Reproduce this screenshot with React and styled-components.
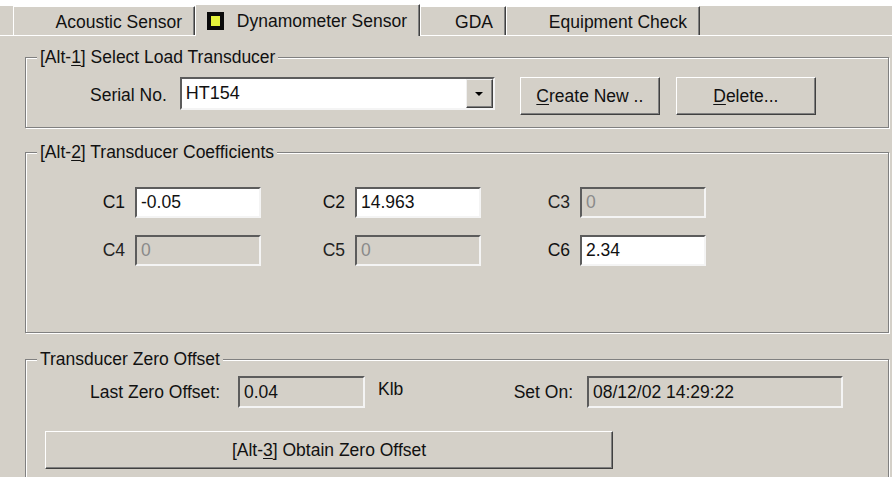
import React from "react";
import styled, { createGlobalStyle } from "styled-components";

const FACE = "#d4d0c8";
const SHADOW = "#808080";
const DARK = "#404040";

const GlobalStyle = createGlobalStyle`
  html, body {
    margin: 0;
    padding: 0;
    background: ${FACE};
  }
  body {
    font-family: "Liberation Sans", Arial, sans-serif;
    font-size: 17.5px;
    color: #111;
  }
`;

const Window = styled.div`
  width: 892px;
  height: 477px;
  overflow: hidden;
  background: ${FACE};
  display: flex;
  flex-direction: column;
`;

const TabStrip = styled.div`
  display: flex;
  align-items: flex-end;
  height: 29px;
  border-top: 6px solid #fff;
  padding-left: 13px;
  background: ${FACE};
`;

const Tab = styled.div`
  box-sizing: border-box;
  position: relative;
  z-index: ${(p) => (p.$active ? 1 : 0)};
  width: ${(p) => p.$w}px;
  height: ${(p) => (p.$active ? 32 : 29)}px;
  margin-bottom: ${(p) => (p.$active ? -1 : 0)}px;
  display: flex;
  align-items: center;
  justify-content: flex-end;
  gap: 13px;
  padding: ${(p) => (p.$active ? "1px 12px 0 0" : "3px 12px 0 0")};
  background: ${FACE};
  border-left: 1px solid #fff;
  border-top: 1px solid #fff;
  border-right: 1px solid ${DARK};
  box-shadow: inset -1px 0 0 ${SHADOW};
  white-space: nowrap;
`;

const TabIcon = styled.svg`
  width: 17px;
  height: 18px;
  flex: none;
`;

const Panel = styled.div`
  flex: 1;
  border-top: 1px solid #fff;
  padding: 11px 3px 0 25px;
  display: flex;
  flex-direction: column;
`;

const GroupBox = styled.fieldset`
  margin: ${(p) => p.$mt}px 0 0;
  padding: ${(p) => p.$pt}px 0 ${(p) => p.$pb}px;
  min-width: 0;
  border: 1px solid ${SHADOW};
  box-shadow: inset 1px 1px 0 #fff, 1px 1px 0 #fff;
`;

const Legend = styled.legend`
  margin-left: 11px;
  padding: 0 3px;
  line-height: 20px;
  background: ${FACE};
`;

const Key = styled.span`
  text-decoration: underline;
  text-underline-offset: 2px;
`;

const SerialRow = styled.div`
  display: flex;
  align-items: flex-start;
  padding-left: 64px;
`;

const Label = styled.span`
  line-height: ${(p) => p.$lh || 20}px;
  white-space: nowrap;
  margin-left: ${(p) => p.$ml || 0}px;
`;

const Combo = styled.div`
  box-sizing: border-box;
  width: 315px;
  height: 33px;
  margin-left: 13px;
  display: flex;
  align-items: stretch;
  background: #fff;
  border: 2px solid;
  border-color: #5c5c5c #f4f4f4 #f4f4f4 #5c5c5c;
`;

const ComboText = styled.span`
  flex: 1;
  padding-left: 4px;
  line-height: 29px;
  font-size: 18px;
`;

const DropButton = styled.span`
  box-sizing: border-box;
  width: 27px;
  display: flex;
  align-items: center;
  justify-content: center;
  background: ${FACE};
  border: 1px solid;
  border-color: #f0f0f0 ${DARK} ${DARK} #f0f0f0;
  box-shadow: inset -1px -1px 0 ${SHADOW};
`;

const Arrow = styled.span`
  width: 0;
  height: 0;
  border-left: 4px solid transparent;
  border-right: 4px solid transparent;
  border-top: 4px solid #000;
`;

const Button = styled.button`
  box-sizing: border-box;
  width: ${(p) => p.$w}px;
  height: 38px;
  margin-left: ${(p) => p.$ml || 0}px;
  padding: 0;
  font: inherit;
  color: #111;
  background: ${FACE};
  border: 1px solid;
  border-color: #fff ${DARK} ${DARK} #fff;
  box-shadow: inset -1px -1px 0 ${SHADOW};
  cursor: default;
`;

const CoeffGrid = styled.div`
  display: grid;
  grid-template-columns: 220px 227px 174px;
  row-gap: 17px;
  padding-left: 59px;
`;

const Cell = styled.label`
  display: flex;
  align-items: center;
  gap: 10px;
`;

const CellLabel = styled.span`
  width: 40px;
  text-align: right;
  color: ${(p) => (p.$off ? "#222" : "#111")};
`;

const Field = styled.input`
  box-sizing: border-box;
  width: ${(p) => p.$w}px;
  height: ${(p) => p.$h || 31}px;
  margin: 0;
  padding: 0 4px;
  font: inherit;
  color: ${(p) => (p.$off ? "#8a8a8a" : "#111")};
  background: ${(p) => (p.$fill ? "#fff" : FACE)};
  border: 2px solid;
  border-color: #5c5c5c #f4f4f4 #f4f4f4 #5c5c5c;
  outline: none;
`;

const OffsetRow = styled.div`
  display: flex;
  align-items: center;
  padding: 0 45px 0 64px;
`;

const Unit = styled.span`
  margin-left: 13px;
  align-self: flex-start;
  margin-top: 1px;
  line-height: 24px;
`;

const SetOn = styled.div`
  margin-left: auto;
  display: flex;
  align-items: center;
  gap: 14px;
`;

const ButtonRow = styled.div`
  margin-top: 23px;
  padding-left: 19px;
`;

const coefficients = [
  { name: "C1", value: "-0.05", on: true },
  { name: "C2", value: "14.963", on: true },
  { name: "C3", value: "0", on: false },
  { name: "C4", value: "0", on: false },
  { name: "C5", value: "0", on: false },
  { name: "C6", value: "2.34", on: true },
];

export default function App() {
  return (
    <>
      <GlobalStyle />
      <Window>
        <TabStrip>
          <Tab $w={182}>Acoustic Sensor</Tab>
          <Tab $w={225} $active>
            <TabIcon viewBox="0 0 17 18">
              <rect x="0" y="0" width="17" height="18" fill="#0a0a0a" />
              <rect x="4" y="4" width="9" height="10" fill="#e4f23a" />
            </TabIcon>
            Dynamometer Sensor
          </Tab>
          <Tab $w={86}>GDA</Tab>
          <Tab $w={194}>Equipment Check</Tab>
        </TabStrip>

        <Panel>
          <GroupBox $mt={0} $pt={10} $pb={12}>
            <Legend>
              [Alt-<Key>1</Key>] Select Load Transducer
            </Legend>
            <SerialRow>
              <Label $lh={36}>Serial No.</Label>
              <Combo>
                <ComboText>HT154</ComboText>
                <DropButton>
                  <Arrow />
                </DropButton>
              </Combo>
              <Button $w={140} $ml={25}>
                <Key>C</Key>reate New ..
              </Button>
              <Button $w={140} $ml={16}>
                <Key>D</Key>elete...
              </Button>
            </SerialRow>
          </GroupBox>

          <GroupBox $mt={14} $pt={25} $pb={66}>
            <Legend>
              [Alt-<Key>2</Key>] Transducer Coefficients
            </Legend>
            <CoeffGrid>
              {coefficients.map((c) => (
                <Cell key={c.name}>
                  <CellLabel $off={!c.on}>{c.name}</CellLabel>
                  <Field
                    $w={126}
                    $fill={c.on}
                    $off={!c.on}
                    readOnly
                    value={c.value}
                  />
                </Cell>
              ))}
            </CoeffGrid>
          </GroupBox>

          <GroupBox $mt={16} $pt={7} $pb={20}>
            <Legend>Transducer Zero Offset</Legend>
            <OffsetRow>
              <Label>Last Zero Offset:</Label>
              <Field $w={127} $h={32} readOnly value="0.04" style={{ marginLeft: 18 }} />
              <Unit>Klb</Unit>
              <SetOn>
                <Label>Set On:</Label>
                <Field $w={256} $h={32} readOnly value="08/12/02 14:29:22" />
              </SetOn>
            </OffsetRow>
            <ButtonRow>
              <Button $w={568}>
                [Alt-<Key>3</Key>] Obtain Zero Offset
              </Button>
            </ButtonRow>
          </GroupBox>
        </Panel>
      </Window>
    </>
  );
}
